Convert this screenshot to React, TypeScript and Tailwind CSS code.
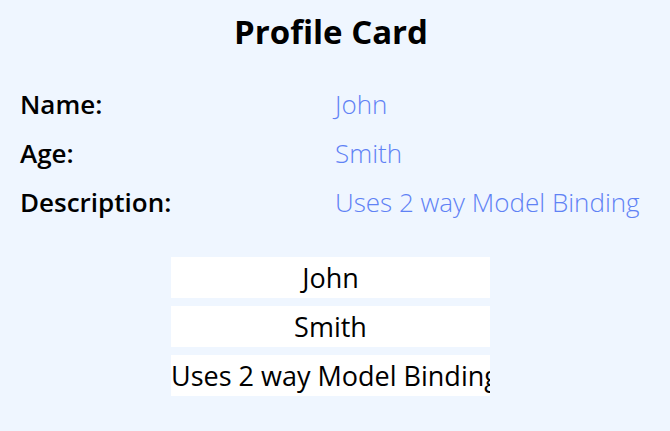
import { useState } from "react";

const font = { fontFamily: '"Open Sans", "Noto Sans", sans-serif' };

const App = () => {
  const [name, setName] = useState("John");
  const [age, setAge] = useState("Smith");
  const [desc, setDesc] = useState("Uses 2 way Model Binding");

  const rows = [
    ["Name:", name],
    ["Age:", age],
    ["Description:", desc],
  ];

  return (
    <div className="min-h-screen w-screen bg-[#eff6ff] text-black pt-[10px]" style={font}>
      <h1 className="pr-[8px] text-center font-bold text-[33px] leading-[44px]">Profile Card</h1>
      <div className="mt-[26px] flex flex-col">
        {rows.map(([label, value]) => (
          <div key={label} className="grid grid-cols-2 h-[49px] items-center">
            <span className="pl-[20px] font-semibold text-[26px]">{label}</span>
            <span className="font-light text-[26px] text-[#5f82f5]">{value}</span>
          </div>
        ))}
      </div>
      <div className="mt-[30px] pr-[9px] flex flex-col items-center gap-[8px]">
        <input
          className="w-[319px] h-[41px] bg-white text-center text-[27px] outline-none"
          value={name}
          onChange={(e) => setName(e.target.value)}
        />
        <input
          className="w-[319px] h-[41px] bg-white text-center text-[27px] outline-none"
          value={age}
          onChange={(e) => setAge(e.target.value)}
        />
        <input
          className="w-[319px] h-[41px] bg-white text-center text-[27px] outline-none"
          value={desc}
          onChange={(e) => setDesc(e.target.value)}
        />
      </div>
    </div>
  );
};

export default App;
